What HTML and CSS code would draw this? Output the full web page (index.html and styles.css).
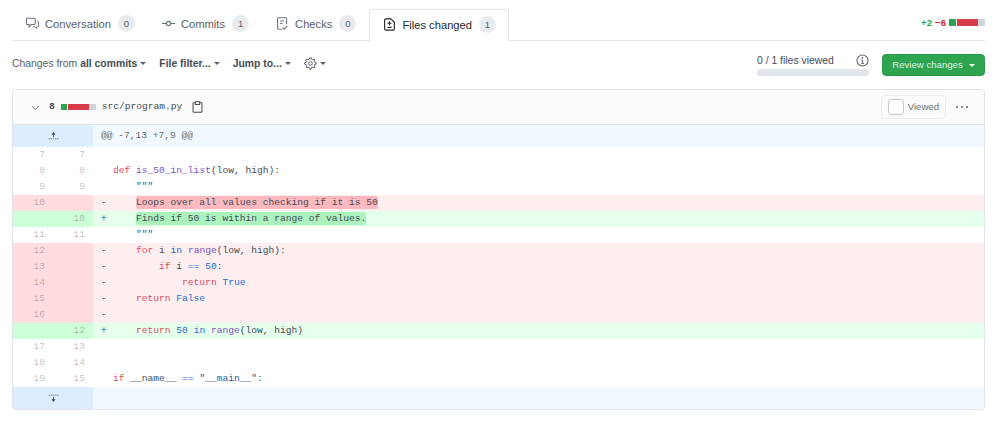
FILE: index.html
```html
<!DOCTYPE html>
<html lang="en">
<head>
<meta charset="utf-8">
<title>Files changed</title>
<link rel="stylesheet" href="styles.css">
</head>
<body>
<div class="tabbar">
  <nav class="tabs">
    <a class="tab"><svg class="ticon" viewBox="0 0 16 16"><path d="M2 1.500h8c.8 0 1.400.6 1.400 1.400v5c0 .8-.6 1.400-1.400 1.400H6.300L3.800 12V9.300H2c-.8 0-1.400-.6-1.400-1.400v-5c0-.8.6-1.400 1.400-1.400z" fill="none" stroke="currentColor" stroke-width="1.300"/><path d="M13.400 5h.8c.7 0 1.200.5 1.200 1.200v4.600c0 .7-.5 1.200-1.200 1.200h-1v2.200L11 12H8.500" fill="none" stroke="currentColor" stroke-width="1.200"/></svg>Conversation<span class="count">0</span></a>
    <a class="tab"><svg class="ticon" viewBox="0 0 16 16"><circle cx="8" cy="8" r="2.600" fill="none" stroke="currentColor" stroke-width="1.400"/><path d="M0 8h5M11 8h5" stroke="currentColor" stroke-width="1.400"/></svg>Commits<span class="count">1</span></a>
    <a class="tab"><svg class="ticon" viewBox="0 0 16 16"><path d="M7 15H3a1 1 0 0 1-1-1V2a1 1 0 0 1 1-1h9a1 1 0 0 1 1 1v7M5 5h5M5 8h3M8 13l2 2 4-4" fill="none" stroke="currentColor" stroke-width="1.300"/></svg>Checks<span class="count">0</span></a>
    <a class="tab active"><svg class="ticon" viewBox="0 0 16 16"><path d="M2 2.500A1.500 1.500 0 0 1 3.500 1h6.300L14 5.200v8.300a1.500 1.500 0 0 1-1.500 1.500h-9A1.500 1.500 0 0 1 2 13.500z" fill="none" stroke="currentColor" stroke-width="1.400"/><path d="M8 4v5M5.500 6.500h5M5.500 11.500h5" stroke="currentColor" stroke-width="1.400"/></svg>Files changed<span class="count">1</span></a>
  </nav>
  <div class="summary"><span class="add">+2</span><span class="del">−6</span><span class="blocks"><i class="bg g"></i><i class="bg r"></i><i class="bg wide"></i><i class="bg n"></i></span></div>
</div>

<div class="toolbar">
  <div class="filters">
    <span class="filter">Changes from <b>all commits</b><i class="caret"></i></span>
    <span class="filter"><b>File filter...</b><i class="caret"></i></span>
    <span class="filter"><b>Jump to...</b><i class="caret"></i></span>
    <span class="filter"><svg class="gearicon" viewBox="0 0 16 16"><path d="M7.200 1h1.600l.5 1.900 1.400.6 1.700-1 1.100 1.100-1 1.700.6 1.400 1.900.5v1.600l-1.900.5-.6 1.400 1 1.700-1.100 1.100-1.700-1-1.400.6-.5 1.900H7.200l-.5-1.900-1.400-.6-1.700 1-1.100-1.100 1-1.700-.6-1.400L.5 8.800V7.200l1.900-.5.6-1.400-1-1.700 1.100-1.100 1.700 1 1.400-.6z" fill="none" stroke="currentColor" stroke-width="1.200"/><circle cx="8" cy="8" r="2.200" fill="none" stroke="currentColor" stroke-width="1.200"/></svg><i class="caret"></i></span>
  </div>
  <div class="actions">
    <div class="progress"><span class="ptext">0 / 1 files viewed</span><span class="pbar"></span></div>
    <svg class="info" viewBox="0 0 16 16"><circle cx="8" cy="8" r="6.800" fill="none" stroke="currentColor" stroke-width="1.300"/><circle cx="8" cy="4.800" r="1" fill="currentColor"/><path d="M6.500 7.500H8.200V11.500M6.300 11.500h3.600" fill="none" stroke="currentColor" stroke-width="1.200"/></svg>
    <button class="review">Review changes<i class="caret light"></i></button>
  </div>
</div>

<section class="file">
  <header class="fhead">
    <div class="fleft">
      <svg class="chev" viewBox="0 0 12 12"><path d="M1.500 4l4.500 4.500L10.500 4" fill="none" stroke="currentColor" stroke-width="1.200"/></svg>
      <span class="mono bold">8</span>
      <span class="fbar"><i class="fg"></i><i class="fr"></i><i class="fn"></i></span>
      <span class="mono fname">src/program.py</span>
      <svg class="clip" viewBox="0 0 12 14"><path d="M3.500 2H1.500a.7.7 0 0 0-.7.700v9.600a.7.7 0 0 0 .7.700h9a.7.7 0 0 0 .7-.700V2.700a.7.7 0 0 0-.7-.700H8.500M3.500 1h5v3h-5z" fill="none" stroke="currentColor" stroke-width="1.200"/></svg>
    </div>
    <div class="fright">
      <label class="viewed"><span class="box"></span>Viewed</label>
      <span class="dots"><i></i><i></i><i></i></span>
    </div>
  </header>
  <div class="diff mono">
    <div class="row hunk"><span class="num2"><svg class="expicon" viewBox="0 0 16 12"><path d="M8 1L5.500 4.500h2v3h1v-3h2zM2 9h1.500v1H2zM4.500 9H6v1H4.500zM7.200 9h1.600v1H7.200zM10 9h1.500v1H10zM12.500 9H14v1h-1.500z" fill="currentColor"/></svg></span><span class="code hunktext">@@ -7,13 +7,9 @@</span></div>
    <div class="row"><span class="n">7</span><span class="n">7</span><span class="sign"></span><span class="code"></span></div>
    <div class="row"><span class="n">8</span><span class="n">8</span><span class="sign"></span><span class="code"><em class="k">def</em> <em class="f">is_50_in_list</em>(low, high):</span></div>
    <div class="row"><span class="n">9</span><span class="n">9</span><span class="sign"></span><span class="code">    <em class="s">"""</em></span></div>
    <div class="row del-row"><span class="n">10</span><span class="n"></span><span class="sign">-</span><span class="code">    <mark class="mdel">Loops over all values checking if it is 50</mark></span></div>
    <div class="row add-row"><span class="n"></span><span class="n">10</span><span class="sign">+</span><span class="code">    <mark class="madd">Finds if 50 is within a range of values.</mark></span></div>
    <div class="row"><span class="n">11</span><span class="n">11</span><span class="sign"></span><span class="code">    <em class="s">"""</em></span></div>
    <div class="row del-row"><span class="n">12</span><span class="n"></span><span class="sign">-</span><span class="code">    <em class="k">for</em> i <em class="c">in</em> <em class="f">range</em>(low, high):</span></div>
    <div class="row del-row"><span class="n">13</span><span class="n"></span><span class="sign">-</span><span class="code">        <em class="k">if</em> i <em class="c">==</em> <em class="c">50</em>:</span></div>
    <div class="row del-row"><span class="n">14</span><span class="n"></span><span class="sign">-</span><span class="code">            <em class="k">return</em> <em class="c">True</em></span></div>
    <div class="row del-row"><span class="n">15</span><span class="n"></span><span class="sign">-</span><span class="code">    <em class="k">return</em> <em class="c">False</em></span></div>
    <div class="row del-row"><span class="n">16</span><span class="n"></span><span class="sign">-</span><span class="code"></span></div>
    <div class="row add-row"><span class="n"></span><span class="n">12</span><span class="sign">+</span><span class="code">    <em class="k">return</em> <em class="c">50</em> <em class="c">in</em> <em class="f">range</em>(low, high)</span></div>
    <div class="row"><span class="n">17</span><span class="n">13</span><span class="sign"></span><span class="code"></span></div>
    <div class="row"><span class="n">18</span><span class="n">14</span><span class="sign"></span><span class="code"></span></div>
    <div class="row"><span class="n">19</span><span class="n">15</span><span class="sign"></span><span class="code"><em class="k">if</em> __name__ <em class="c">==</em> <em class="s">"__main__"</em>:</span></div>
    <div class="row hunk"><span class="num2"><svg class="expicon" viewBox="0 0 16 12"><path d="M8 11L5.500 7.500h2v-3h1v3h2zM2 2h1.500v1H2zM4.500 2H6v1H4.500zM7.200 2h1.600v1H7.200zM10 2h1.500v1H10zM12.500 2H14v1h-1.500z" fill="currentColor"/></svg></span><span class="code"></span></div>
  </div>
</section>
</body>
</html>
```
FILE: styles.css
```css
* { box-sizing: border-box; }
html, body { margin: 0; padding: 0; }
body {
  width: 995px; height: 421px; overflow: hidden; background: #fff; color: #24292e;
  font: 11.2px/16px "Liberation Sans", Arial, sans-serif;
  padding: 9px 10px 0 12px;
}
.tabbar { display: flex; justify-content: space-between; height: 32px; border-bottom: 1px solid #e1e4e8; }
.tabs { display: flex; height: 32px; }
.tab { display: flex; align-items: center; height: 29px; padding: 0 13px 0 14px; color: #586069; font-size: 11.2px; white-space: nowrap; }
.tab.active { height: 32px; padding: 0 12px 2px 13px; background: #fff; border: 1px solid #e1e4e8; border-bottom: 0; border-radius: 3px 3px 0 0; color: #24292e; }
.ticon { width: 13px; height: 13px; margin-right: 6px; flex: none; color: #6a737d; }
.active .ticon { color: #24292e; }
.count { display: inline-block; min-width: 17px; height: 17px; line-height: 17px; margin-left: 7px; border-radius: 9px; background: #e9ebee; text-align: center; font-size: 9.6px; color: #586069; }
.summary { font-size: 9.6px; font-weight: 700; display: flex; align-items: center; height: 27px; gap: 3px; }
.add { color: #28a745; } .del { color: #cb2431; }
.blocks { display: flex; gap: 1px; }
.bg { display: block; width: 7px; height: 7px; background: #d73a49; }
.bg.g { background: #2ca44f; } .bg.wide { width: 14px; margin-left: -1px; } .bg.n { background: #d1d5da; margin-left: -1px; }

.toolbar { display: flex; justify-content: space-between; height: 48px; align-items: center; }
.filters { display: flex; gap: 13px; color: #586069; font-size: 10.4px; padding-bottom: 3px; }
.filter { display: flex; align-items: center; white-space: pre; }
.filter b { color: #444d56; }
.caret { display: block; width: 0; height: 0; margin-left: 3px; border: 3px solid transparent; border-top-color: #586069; border-bottom: 0; }
.caret.light { border-top-color: #fff; margin-left: 6px; }
.gearicon { width: 13px; height: 13px; color: #586069; }
.actions { display: flex; align-items: center; }
.progress { display: flex; flex-direction: column; width: 112px; }
.ptext { line-height: 13px; color: #444d56; font-size: 10.4px; }
.pbar { height: 7px; border-radius: 4px; background: #e1e4e8; margin-top: 2px; }
.info { width: 13px; height: 13px; color: #586069; margin: 0 13px 0 -13px; align-self: flex-start; }
.review { width: 103px; height: 22px; padding: 0; border: 1px solid #2c974b; border-radius: 4px; background: #2ea44f; color: #dff3e5; font: 9.6px/20px "Liberation Sans", Arial, sans-serif; display: flex; align-items: center; justify-content: center; }

.file { border: 1px solid #e1e4e8; border-radius: 4px; overflow: hidden; }
.fhead { display: flex; justify-content: space-between; align-items: center; height: 35px; background: #fafbfc; border-bottom: 1px solid #e1e4e8; padding: 0 8px 0 18px; }
.fleft, .fright { display: flex; align-items: center; }
.mono, .mono * { font-family: "Liberation Mono", "DejaVu Sans Mono", monospace; font-size: 9.6px; }
.bold { font-weight: 700; color: #444d56; }
.chev { width: 9px; height: 9px; color: #586069; margin-right: 9px; }
.fbar { display: flex; margin: 0 6px; height: 6px; width: 35px; }
.fg { width: 6px; background: #2ca44f; margin-right: 1px; } .fr { width: 21px; background: #d73a49; } .fn { width: 7px; background: #d1d5da; }
.fname { color: #444d56; }
.clip { width: 11px; height: 12px; color: #444d56; margin-left: 10px; }
.viewed { display: flex; align-items: center; height: 24px; width: 65px; border: 1px solid #eceef1; border-radius: 4px; background: #fafbfc; padding: 0 6px; font-size: 9.6px; color: #6a737d; }
.box { display: block; width: 16px; height: 16px; border: 1px solid #c6cbd1; border-radius: 3px; background: #fff; margin-right: 4px; }
.dots { display: flex; gap: 3px; margin: 0 6px 0 10px; width: 14px; }
.dots i { width: 2px; height: 2px; border-radius: 50%; background: #586069; }

.diff { background: #fff; }
.row { display: flex; height: 16px; line-height: 16px; }
.row .n { width: 40px; flex: none; text-align: right; padding-right: 8px; color: rgba(27,31,35,.3); }
.sign { width: 20px; flex: none; padding-left: 8px; color: #444d56; }
.code { flex: 1; white-space: pre; color: #444d56; }
em { font-style: normal; }
.k { color: #dc4c5a; } .f { color: #7c55c9; } .c { color: #1a6fd6; } .s { color: #2a5a9a; }
.del-row { background: #ffeef0; } .del-row .n { background: #ffdce0; }
.add-row { background: #e6ffed; } .add-row .n { background: #cdffd8; }
mark { color: #444d56; border-radius: 2px; padding: 1px 0; }
.mdel { background: #fdb8c0; } .madd { background: #acf2bd; }
.hunk { height: 22px; background: #f1f8ff; align-items: center; }
.num2 { width: 80px; flex: none; height: 100%; background: #dbedff; display: flex; align-items: center; justify-content: center; color: #444d56; }
.hunktext { padding-left: 8px; color: rgba(27,31,35,.7); }
.expicon { width: 13px; height: 10px; }
```
